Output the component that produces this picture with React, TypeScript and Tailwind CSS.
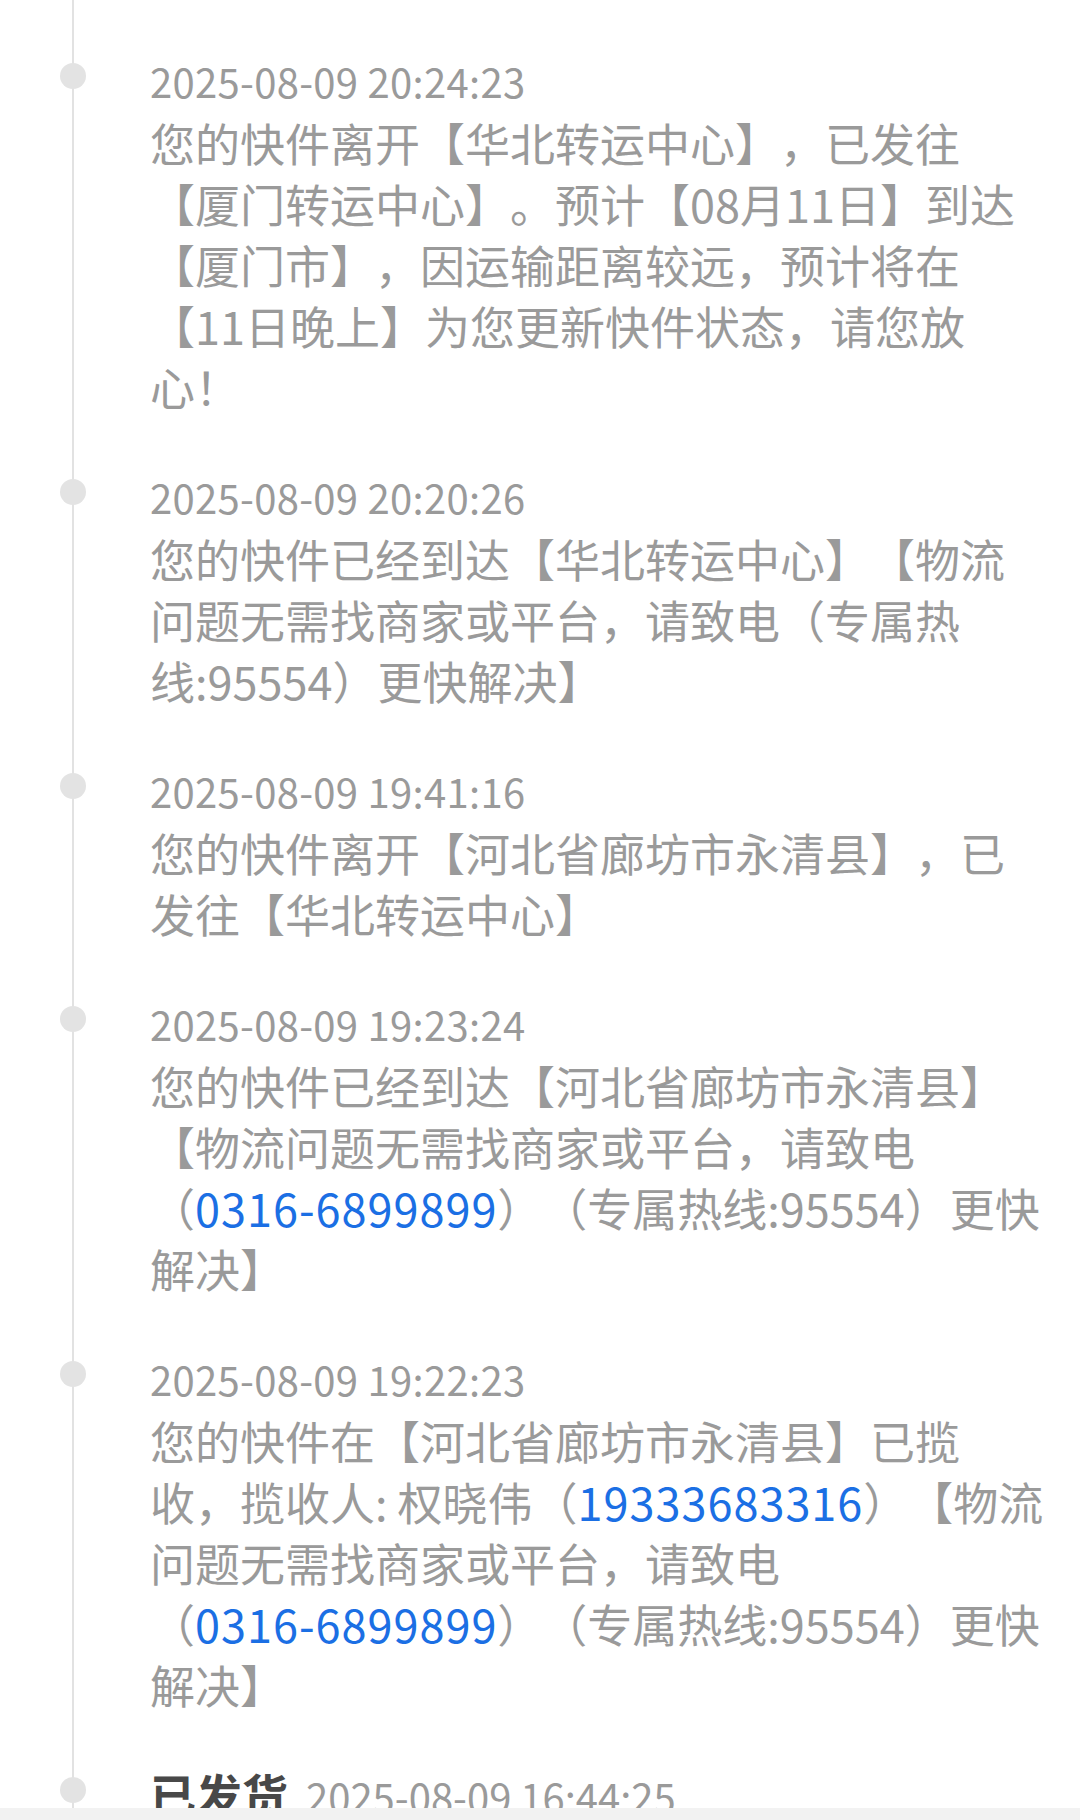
type Part = string | { tel: string };

type Entry = {
    time: string;
    lines: Part[][];
};

const entries: Entry[] = [
    {
        time: "2025-08-09 20:24:23",
        lines: [
            ["您的快件离开【华北转运中心】，已发往"],
            ["【厦门转运中心】。预计【08月11日】到达"],
            ["【厦门市】，因运输距离较远，预计将在"],
            ["【11日晚上】为您更新快件状态，请您放"],
            ["心！"],
        ],
    },
    {
        time: "2025-08-09 20:20:26",
        lines: [
            ["您的快件已经到达【华北转运中心】【物流"],
            ["问题无需找商家或平台，请致电（专属热"],
            ["线:95554）更快解决】"],
        ],
    },
    {
        time: "2025-08-09 19:41:16",
        lines: [["您的快件离开【河北省廊坊市永清县】，已"], ["发往【华北转运中心】"]],
    },
    {
        time: "2025-08-09 19:23:24",
        lines: [
            ["您的快件已经到达【河北省廊坊市永清县】"],
            ["【物流问题无需找商家或平台，请致电"],
            ["（", { tel: "0316-6899899" }, "）（专属热线:95554）更快"],
            ["解决】"],
        ],
    },
    {
        time: "2025-08-09 19:22:23",
        lines: [
            ["您的快件在【河北省廊坊市永清县】已揽"],
            ["收，揽收人: 权晓伟（", { tel: "19333683316" }, "）【物流"],
            ["问题无需找商家或平台，请致电"],
            ["（", { tel: "0316-6899899" }, "）（专属热线:95554）更快"],
            ["解决】"],
        ],
    },
];

const Dot = () => (
    <div className="absolute left-[60px] top-[12px] w-[26px] h-[26px] rounded-full bg-[#e3e3e3]"></div>
);

export default function App() {
    return (
        <div className="h-[1820px] flex flex-col bg-white overflow-hidden font-['Noto_Sans_CJK_SC','Noto_Sans',sans-serif] [text-spacing-trim:space-all]">
            <div className="relative flex-1 overflow-hidden pt-[51px]">
                {/* timeline rail */}
                <div className="absolute left-[72px] top-0 bottom-0 w-[2px] bg-[#e2e2e2]"></div>
                {entries.map((e) => (
                    <div key={e.time} className="flex pb-[50px]">
                        <div className="relative w-[150px] shrink-0">
                            <Dot />
                        </div>
                        <div className="flex flex-col text-[#9a9a9a]">
                            <div className="text-[40px] leading-[61px] tracking-[0.3px]">{e.time}</div>
                            {e.lines.map((line, i) => (
                                <div key={i} className="text-[45px] leading-[61px] whitespace-nowrap">
                                    {line.map((p, j) =>
                                        typeof p === "string" ? (
                                            <span key={j}>{p}</span>
                                        ) : (
                                            <span key={j} className="text-[#1b6fe4] tracking-[1px]">
                                                {p.tel}
                                            </span>
                                        )
                                    )}
                                </div>
                            ))}
                        </div>
                    </div>
                ))}
                <div className="flex">
                    <div className="relative w-[150px] shrink-0">
                        <Dot />
                    </div>
                    <div className="flex items-baseline gap-[18px] leading-[56px]">
                        <span className="text-[46px] font-bold text-[#484848]">已发货</span>
                        <span className="text-[40px] text-[#9a9a9a]">2025-08-09 16:44:25</span>
                    </div>
                </div>
            </div>
            <div className="h-[12px] shrink-0 bg-[#f2f2f2]"></div>
        </div>
    );
}
